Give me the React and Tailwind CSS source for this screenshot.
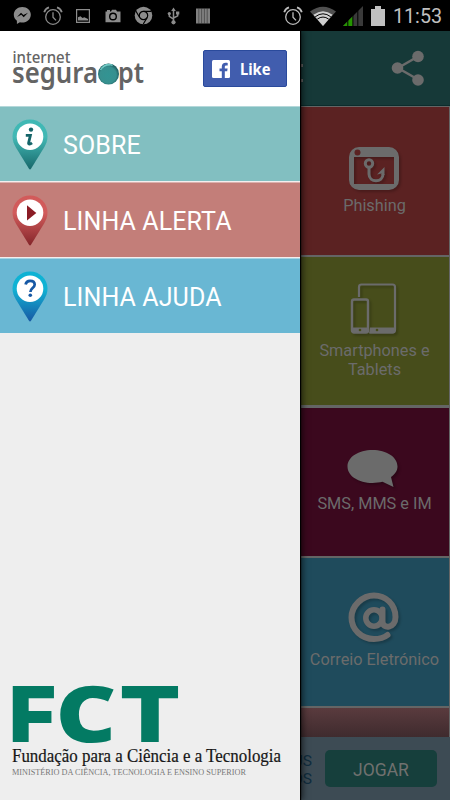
const menuItems = [
  { id: "sobre", label: "SOBRE", bg: "bg-[#82bfc1]", from: "#3fb8b4", to: "#17676a", glyph: "info" },
  { id: "alerta", label: "LINHA ALERTA", bg: "bg-[#c37e79]", from: "#d25a5a", to: "#84252a", glyph: "play" },
  { id: "ajuda", label: "LINHA AJUDA", bg: "bg-[#69b7d3]", from: "#0cb2d4", to: "#1858a4", glyph: "help" },
];

const tiles = [
  { id: "phishing", label: "Phishing", bg: "bg-[#5b2222]", pad: "pt-[38px]", text: "mt-[3px]", Icon: PhishingIcon },
  { id: "devices", label: "Smartphones e Tablets", bg: "bg-[#474d1b]", pad: "pt-[25px]", text: "mt-[5px]", Icon: DevicesIcon },
  { id: "sms", label: "SMS, MMS e IM", bg: "bg-[#3b081e]", pad: "pt-[38px]", text: "mt-[2px]", Icon: BubbleIcon },
  { id: "mail", label: "Correio Eletrónico", bg: "bg-[#1f4b5c]", pad: "pt-[31px]", text: "mt-[5px]", Icon: AtIcon },
];

function AlarmIcon({ color }) {
  return (
    <svg width="20" height="20" viewBox="0 0 20 20" fill="none" stroke={color} strokeWidth="1.3">
      <circle cx="10" cy="11" r="7.3" />
      <path d="M10 6.2v5l3 3.2" />
      <path d="M1.2 6.2C2 3.8 3.8 2.1 6 1.4M18.8 6.2C18 3.8 16.2 2.1 14 1.4" strokeWidth="1.8" />
    </svg>
  );
}

function StatusBar() {
  return (
    <header className="flex h-[31px] shrink-0 items-center bg-black pl-[13px] pr-[5px]">
      <svg width="19" height="19" viewBox="0 0 19 19">
        <path d="M9.3 1C4.5 1 .8 4.4.8 8.700c0 2.500 1.200 4.600 3.100 6V18l3-1.800c.8.2 1.600.3 2.400.3 4.800 0 8.500-3.400 8.500-7.800S14.100 1 9.300 1z" fill="#8c8c8c" />
        <path d="M4 11l4-4.200 2.400 2.300L15 6.800l-4.300 4.400-2.400-2.400z" fill="#000" />
      </svg>
      <span className="ml-[11px]"><AlarmIcon color="#8c8c8c" /></span>
      <svg className="ml-[13px]" width="14" height="14" viewBox="0 0 14 14">
        <path d="M.6.6h12.8v12.8H.6z" fill="none" stroke="#8c8c8c" strokeWidth="1.2" />
        <path d="M2 11.5V8.200l2.500-1 2 1.800 1.800-.8L12 10v1.500z" fill="#8c8c8c" />
      </svg>
      <svg className="ml-[15px]" width="16" height="14" viewBox="0 0 16 14">
        <path d="M.5 2.500H2V1h3v1.500h1L7 .8h4l1 1.700h3.500v10.700H.5z" fill="#8c8c8c" />
        <circle cx="8" cy="7.500" r="3.300" fill="none" stroke="#000" strokeWidth="1.4" />
      </svg>
      <svg className="ml-[13px]" width="19" height="19" viewBox="0 0 19 19">
        <circle cx="9.500" cy="9.500" r="8.800" fill="#8c8c8c" />
        <g fill="none" stroke="#000" strokeWidth="1.2">
          <circle cx="9.500" cy="9.500" r="4.200" />
          <path d="M9.500 5.300h7.800M5.700 11.500L1.800 5M13.200 11.500L9.300 18" />
        </g>
      </svg>
      <svg className="ml-[14px]" width="13" height="18" viewBox="0 0 13 18">
        <g fill="none" stroke="#8c8c8c" strokeWidth="1.5">
          <path d="M6.500 3v12M2.300 6.500v2.800l4.200 2.800M10.700 6v2.800L6.500 11" />
        </g>
        <path d="M6.500.6L8.800 4H4.200zM9 4.600h3.300v3H9z" fill="#8c8c8c" />
        <circle cx="2.300" cy="6.600" r="1.600" fill="#8c8c8c" />
        <circle cx="6.500" cy="15.300" r="2.100" fill="#8c8c8c" />
      </svg>
      <svg className="ml-[16px]" width="14" height="16" viewBox="0 0 14 16">
        <path d="M0 .5h14v15H0z" fill="#808080" />
        <path d="M2.800 0v16M5.600 0v16M8.400 0v16M11.200 0v16" stroke="#333" strokeWidth=".6" />
      </svg>

      <span className="ml-auto"><AlarmIcon color="#bdbdbd" /></span>
      <svg className="ml-[7px]" width="26" height="20" viewBox="0 0 26 20">
        <path d="M0 5.500Q13-4 26 5.500L13 20z" fill="#505050" />
        <path d="M3.400 8.800Q13 1.500 22.600 8.800L13 20z" fill="#cfcfcf" />
        <path d="M5.200 10.800Q13 4.800 20.800 10.800M7.300 13.100Q13 9 18.700 13.100" fill="none" stroke="#000" strokeWidth="1" />
      </svg>
      <svg className="ml-[7px]" width="20" height="20" viewBox="0 0 20 20">
        <path d="M0 20L20 0v20z" fill="#3a3a3a" />
        <path d="M0 20L10 10v10z" fill="#259500" />
        <path d="M4.800 0v20M9.900 0v20M14.800 0v20" stroke="#000" strokeWidth="1" />
      </svg>
      <svg className="ml-[8px]" width="14" height="20" viewBox="0 0 14 20">
        <path d="M0 3h4V0h6v3h4v17H0z" fill="#c0c0c0" />
      </svg>
      <svg className="ml-[8px]" width="52" height="28" viewBox="0 0 52 28">
        <text x="0" y="21" fontSize="20.500" fill="#c0c0c0" textLength="49" lengthAdjust="spacingAndGlyphs">11:53</text>
      </svg>
    </header>
  );
}

function PinIcon({ item }) {
  return (
    <svg width="36" height="51" viewBox="0 0 36 51">
      <defs>
        <linearGradient id={`pin-${item.id}`} x1="0" y1="0" x2="0" y2="1">
          <stop offset="0" stopColor={item.from} />
          <stop offset=".35" stopColor={item.from} stopOpacity=".95" />
          <stop offset="1" stopColor={item.to} />
        </linearGradient>
      </defs>
      <path d="M18 .5C8.200.5.5 8.100.5 17.500c0 4 1.300 7.400 3.400 11L17 49.800c.5.8 1.500.8 2 0l13.100-21.300c2.100-3.600 3.400-7 3.400-11C35.500 8.100 27.800.5 18 .5z" fill={`url(#pin-${item.id})`} />
      <circle cx="18" cy="17.700" r="13.300" fill="#fff" />
      {item.glyph === "info" && (
        <g>
          <circle cx="19" cy="10.600" r="2.200" fill="#146469" />
          <path d="M13.800 16.300h4.600l-1.800 7.700c-.3 1.500 1.600 1.200 3.400-.2" fill="none" stroke="#146469" strokeWidth="2.800" />
        </g>
      )}
      {item.glyph === "play" && <path d="M15 10.200l9.300 7.700-9.300 7.700z" fill="#8b1c25" />}
      {item.glyph === "help" && (
        <g>
          <path d="M13.600 13.500c.4-2.500 2-3.700 4.500-3.700 2.800 0 4.600 1.500 4.600 3.800 0 3.500-4.300 3.500-4.300 7.300" fill="none" stroke="#1658a5" strokeWidth="2.700" />
          <circle cx="18.300" cy="24.300" r="1.800" fill="#1658a5" />
        </g>
      )}
    </svg>
  );
}

function Logo() {
  return (
    <svg width="134" height="48" viewBox="0 -4 134 48" fontFamily="'Noto Sans', 'Open Sans', sans-serif">
      <defs>
        <radialGradient id="ball" cx=".48" cy=".55" r=".55">
          <stop offset="0" stopColor="#329493" />
          <stop offset=".7" stopColor="#37908f" />
          <stop offset="1" stopColor="#1c5557" />
        </radialGradient>
      </defs>
      <text x=".5" y="14" fontSize="16.500" fontWeight="500" fill="#646464" textLength="58" lengthAdjust="spacingAndGlyphs">internet</text>
      <text x="0" y="34" fontSize="28.500" fontWeight="600" fill="#646464" textLength="86" lengthAdjust="spacingAndGlyphs">segura</text>
      <text x="106" y="34" fontSize="28.500" fontWeight="600" fill="#646464" textLength="26" lengthAdjust="spacingAndGlyphs">pt</text>
      <circle cx="96.500" cy="25" r="10.500" fill="url(#ball)" />
      <path d="M88.500 21c2-5 7-7 12-4.800-5-.8-9 1-12 4.800z" fill="#9be6e0" stroke="#6fc9c5" strokeWidth="1" />
    </svg>
  );
}

function LikeButton() {
  return (
    <button className="mt-[5px] flex h-[37px] w-[84px] items-center rounded-[2px] border border-[#2a4a9c] bg-[#415dae] pl-[8px]">
      <svg width="18" height="18" viewBox="0 0 18 18">
        <rect width="18" height="18" rx="1.500" fill="#fff" />
        <path d="M9.800 18v-6.700H7.500V8.500h2.300V6.700c0-2.600 1.400-3.900 3.900-3.900.8 0 1.500.1 2 .2v2.500h-1.400c-1.100 0-1.500.5-1.500 1.500v1.500h2.800l-.4 2.800h-2.400V18z" fill="#415dae" />
      </svg>
      <svg className="ml-[10px]" width="33" height="26" viewBox="0 0 33 26">
        <text x="0" y="19" fontSize="16" fontWeight="700" fill="#fff" fontFamily="'Noto Sans', sans-serif" textLength="30.500" lengthAdjust="spacingAndGlyphs">Like</text>
      </svg>
    </button>
  );
}

function FctLogo() {
  return (
    <svg width="274" height="112" viewBox="0 -16 274 112">
      <g fill="#037a63" fontFamily="Inter, 'Open Sans', sans-serif" fontWeight="900" fontSize="77">
        <text x="-3" y="59" textLength="47" lengthAdjust="spacingAndGlyphs">F</text>
        <text x="43.500" y="59" fontFamily="'Open Sans', sans-serif" fontWeight="800" fontSize="78" textLength="61" lengthAdjust="spacingAndGlyphs">C</text>
        <text x="107.500" y="59" textLength="61" lengthAdjust="spacingAndGlyphs">T</text>
      </g>
      <g fontFamily="'Liberation Serif', serif">
        <text x="0" y="78.500" fontSize="18" fill="#161616" stroke="#161616" strokeWidth=".2" textLength="269" lengthAdjust="spacingAndGlyphs">Fundação para a Ciência e a Tecnologia</text>
        <text x="0" y="91.500" fontSize="9" fill="#777" textLength="234" lengthAdjust="spacingAndGlyphs">MINISTÉRIO DA CIÊNCIA, TECNOLOGIA E ENSINO SUPERIOR</text>
      </g>
    </svg>
  );
}

function Drawer() {
  return (
    <aside className="z-10 flex w-[300px] shrink-0 flex-col bg-[#eee] shadow-[1px_0_1px_#000,3px_0_6px_rgba(0,0,0,0.55)]">
      <div className="flex h-[75px] shrink-0 items-start justify-between bg-white pl-[12px] pr-[13px] pt-[14px]">
        <Logo />
        <LikeButton />
      </div>
      <nav className="flex flex-col gap-[1px] bg-[#f4eeee]">
        {menuItems.map((item) => (
          <a key={item.id} className={`flex h-[75px] items-center border-t border-white/40 pl-[12px] ${item.bg}`}>
            <PinIcon item={item} />
            <span className="ml-[15px] pt-[3px] text-[25px] leading-none tracking-[0.1px] text-white">{item.label}</span>
          </a>
        ))}
      </nav>
      <div className="mt-auto pb-[21px] pl-[12px]">
        <FctLogo />
      </div>
    </aside>
  );
}

function PhishingIcon() {
  return (
    <svg width="54" height="48" viewBox="0 0 54 48" className="drop-shadow-[2px_2px_1px_rgba(0,0,0,0.2)]">
      <path fillRule="evenodd" d="M11 2h30a10 10 0 0 1 10 10v23a10 10 0 0 1-10 10H11A10 10 0 0 1 1 35V12A10 10 0 0 1 11 2zM6 12h40v27H6z" fill="#6b6b6b" />
      <circle cx="9.500" cy="7.500" r="3" fill="#5b2222" />
      <g fill="none" stroke="#6b6b6b">
        <circle cx="21" cy="18.500" r="3.700" strokeWidth="3" />
        <path d="M21 22v7c0 9 14 9 14 0" strokeWidth="3" />
      </g>
      <path d="M36.500 22v8h-3v-1.500l-4.500 1z" fill="#6b6b6b" />
    </svg>
  );
}

function DevicesIcon() {
  return (
    <svg width="52" height="54" viewBox="0 0 52 54" className="drop-shadow-[2px_2px_1px_rgba(0,0,0,0.2)]">
      <path d="M10 15V5q0-2.500 2.500-2.500h31Q46 2.500 46 5v43q0 2.500-2.500 2.500H21" fill="none" stroke="#6b6b6b" strokeWidth="2.200" />
      <path d="M21 45.500h25v4q0 2-2 2H20z" fill="#6b6b6b" />
      <rect x="3" y="17.500" width="16" height="33" rx="2" fill="none" stroke="#6b6b6b" strokeWidth="2.400" />
      <path d="M3 45.500h16v5H3z" fill="#6b6b6b" />
      <circle cx="11" cy="48" r="1.300" fill="#474d1b" />
      <circle cx="28" cy="48" r="1.300" fill="#474d1b" />
    </svg>
  );
}

function BubbleIcon() {
  return (
    <svg width="57" height="46" viewBox="0 0 57 46" className="drop-shadow-[2px_2px_1px_rgba(0,0,0,0.25)]">
      <path d="M26.500 4C12.500 4 1.500 11 1.500 20.500S12.500 37 26.500 37c3.500 0 7-.5 10-1.200l11 5.200-2.500-10c4-2.700 6.500-6.300 6.500-10.500C51.500 11 40.500 4 26.500 4z" fill="#6b6b6b" />
    </svg>
  );
}

function AtIcon() {
  return (
    <svg width="58" height="56" viewBox="0 0 58 56" className="drop-shadow-[2px_2px_1px_rgba(0,0,0,0.2)]">
      <g fill="none" stroke="#6b6b6b" strokeLinecap="round">
        <circle cx="28" cy="29" r="8.200" strokeWidth="5.600" />
        <path d="M36.500 20.500v12c0 8 13 7 13-4.500C49.500 15 39.500 6.500 28 6.500S5.500 16.500 5.500 28.500 15.500 50 28 50c5 0 10-1.200 13.500-4" strokeWidth="6" />
      </g>
    </svg>
  );
}

function Content() {
  return (
    <main className="flex min-w-0 flex-1 flex-col bg-[#646565]">
      <div className="flex h-[75px] shrink-0 items-center justify-between border-b border-[#0b2c2c] bg-[#163938] pr-[25px]">
        <div className="flex w-[3px] flex-col gap-[12px] pt-[9px]">
          <span className="h-[3px] bg-[#656565]" />
          <span className="h-[3px] bg-[#656565]" />
        </div>
        <svg width="34" height="36" viewBox="0 0 34 36">
          <path d="M27 6.500L7 18l20 11.500" fill="none" stroke="#6b6b6b" strokeWidth="2.500" />
          <g fill="#6b6b6b">
            <circle cx="27" cy="6.500" r="5.800" />
            <circle cx="6.500" cy="18" r="5.800" />
            <circle cx="27" cy="30" r="5.800" />
          </g>
        </svg>
      </div>
      <div className="flex flex-1 flex-col gap-[2.300px] overflow-hidden pr-[1px] pt-[1px]">
        {tiles.map(({ id, label, bg, pad, text, Icon }) => (
          <section key={id} className={`flex h-[148px] shrink-0 flex-col items-center ${pad} ${bg}`}>
            <Icon />
            <p className={`w-[135px] text-center text-[16.300px] leading-[19px] text-[#6b6b6b] ${text}`}>{label}</p>
          </section>
        ))}
        <section className="flex-1 bg-linear-to-b from-[#5a3b3e] to-[#3f2b2e]" />
      </div>
      <footer className="flex h-[63px] shrink-0 items-center bg-[#3d4b54] pr-[13px]">
        <div className="flex w-[12px] flex-col items-end overflow-hidden pt-[2px] text-[15.500px] leading-[18px] text-[#102d3e]">
          <span>US</span>
          <span>OS</span>
        </div>
        <button className="ml-[13px] h-[37px] w-[112px] rounded-[5px] bg-[#163f3c] pt-[3px] text-[17.500px] text-[#70716f]">JOGAR</button>
      </footer>
    </main>
  );
}

export default function App() {
  return (
    <div className="flex h-[800px] w-[450px] flex-col overflow-hidden bg-black font-[Roboto,sans-serif]">
      <StatusBar />
      <div className="flex min-h-0 flex-1">
        <Drawer />
        <Content />
      </div>
    </div>
  );
}
